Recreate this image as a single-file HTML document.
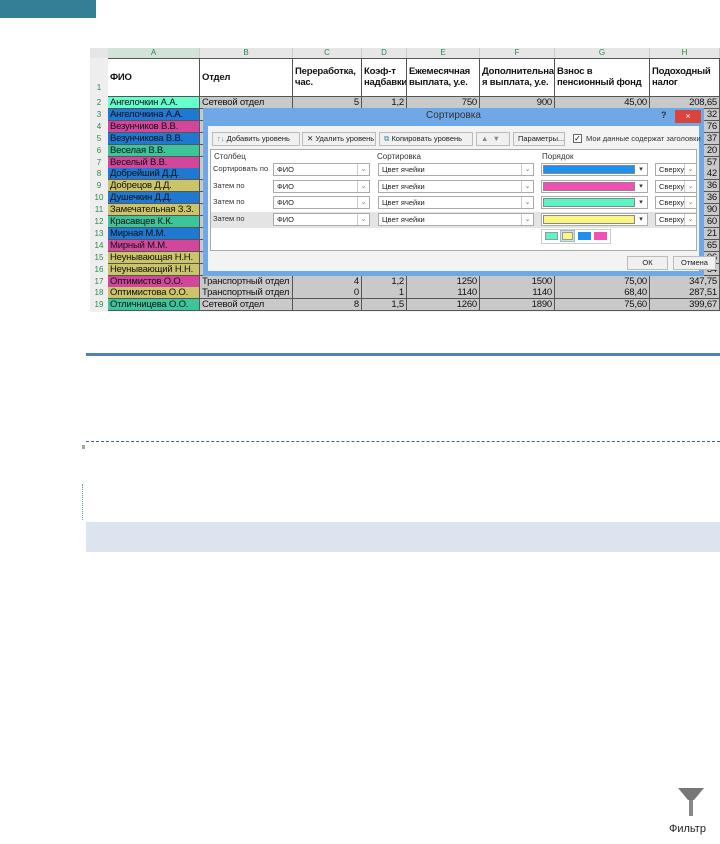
<!DOCTYPE html>
<html><head><meta charset="utf-8"><style>
*{margin:0;padding:0;box-sizing:border-box}
body{width:720px;height:844px;background:#fff;position:relative;overflow:hidden;font-family:"Liberation Sans",sans-serif}
.a{position:absolute}
.c{position:absolute;border-right:1px solid #555;border-bottom:1px solid #555;font-size:9.5px;letter-spacing:-0.2px;line-height:11px;white-space:nowrap;overflow:hidden;padding:0 2px;color:#111}
.r{text-align:right}
.h{position:absolute;background:#e6e6e6;color:#2a8a4a;font-size:8px;text-align:center;border-right:1px solid #ccc;line-height:10px}
.rn{position:absolute;left:90px;width:18px;font-size:8px;color:#2a8a4a;text-align:center;background:#eee}
.dl{font-size:8px;color:#333}
.cb{position:absolute;height:13px;background:#fff;border:1px solid #aaa;font-size:7.5px;line-height:11px;padding-left:3px;color:#222}
.cb .ar{position:absolute;right:0;top:0;width:12px;height:11px;border-left:1px solid #ccc;font-size:7px;text-align:center;color:#777}
.btn{position:absolute;top:132px;height:14px;background:#f0f0f0;border:1px solid #bbb;font-size:7.5px;line-height:12px;padding-left:4px;color:#222;white-space:nowrap;overflow:hidden}
</style></head><body>
<div class="a" style="left:0;top:0;width:96px;height:18px;background:#347f96"></div>

<div class="a" style="left:90px;top:48px;width:630px;height:264px;background:#f2f2f2"></div>
<div class="a" style="left:90px;top:48px;width:630px;height:10px;background:#e6e6e6"></div>
<div class="h" style="left:108px;top:48px;width:92px;background:#d3e3d8">A</div>
<div class="h" style="left:200px;top:48px;width:93px">B</div>
<div class="h" style="left:293px;top:48px;width:69px">C</div>
<div class="h" style="left:362px;top:48px;width:45px">D</div>
<div class="h" style="left:407px;top:48px;width:73px">E</div>
<div class="h" style="left:480px;top:48px;width:75px">F</div>
<div class="h" style="left:555px;top:48px;width:95px">G</div>
<div class="h" style="left:650px;top:48px;width:70px">H</div>
<div class="a" style="left:108px;top:58px;width:612px;height:39px;background:#fff;border-top:1px solid #555"></div>
<div class="rn" style="top:58px;height:39px;line-height:60px">1</div>
<div class="c" style="left:108px;top:58px;width:92px;height:39px;font-weight:bold;line-height:39px">ФИО</div>
<div class="c" style="left:200px;top:58px;width:93px;height:39px;font-weight:bold;line-height:39px">Отдел</div>
<div class="c" style="left:293px;top:58px;width:69px;height:39px;font-weight:bold;padding-top:8px">Переработка,<br>час.</div>
<div class="c" style="left:362px;top:58px;width:45px;height:39px;font-weight:bold;padding-top:8px">Коэф-т<br>надбавки</div>
<div class="c" style="left:407px;top:58px;width:73px;height:39px;font-weight:bold;padding-top:8px">Ежемесячная<br>выплата, у.е.</div>
<div class="c" style="left:480px;top:58px;width:75px;height:39px;font-weight:bold;padding-top:8px">Дополнительна<br>я выплата, у.е.</div>
<div class="c" style="left:555px;top:58px;width:95px;height:39px;font-weight:bold;padding-top:8px">Взнос в<br>пенсионный фонд</div>
<div class="c" style="left:650px;top:58px;width:70px;height:39px;font-weight:bold;padding-top:8px">Подоходный<br>налог</div>

<div id="rows"></div>
<script>
var names=["Ангелочкин А.А.","Ангелочкина А.А.","Везунчиков В.В.","Везунчикова В.В.","Веселая В.В.","Веселый В.В.","Добрейший Д.Д.","Добрецов Д.Д.","Душечкин Д.Д.","Замечательная З.З.","Красавцев К.К.","Мирная М.М.","Мирный М.М.","Неунывающая Н.Н.","Неунывающий Н.Н.","Оптимистов О.О.","Оптимистова О.О.","Отличницева О.О."];
var B="#1f78d2",M="#d2479c",G="#3cc49a",K="#cbc469",C="#66ffcc";
var cols=[C,B,M,B,G,M,B,K,B,K,G,B,M,K,K,M,K,G];
var hs=["208,65","32","76","37","20","57","42","36","36","90","60","21","65","06","34","347,75","287,51","399,67"];
var data={0:["Сетевой отдел","5","1,2","750","900","45,00"],15:["Транспортный отдел","4","1,2","1250","1500","75,00"],16:["Транспортный отдел","0","1","1140","1140","68,40"],17:["Сетевой отдел","8","1,5","1260","1890","75,60"]};
var xs=[[200,93],[293,69],[362,45],[407,73],[480,75],[555,95]];
var h="";
for(var i=0;i<18;i++){var t=97+i*11.9;
h+='<div class="rn" style="top:'+t+'px;height:12px;line-height:12px">'+(i+2)+'</div>';
h+='<div class="c" style="left:108px;top:'+t+'px;width:92px;height:12px;background:'+cols[i]+'">'+names[i]+'</div>';
for(var j=0;j<6;j++){var v=data[i]?data[i][j]:"";h+='<div class="c'+(j?' r':'')+'" style="left:'+xs[j][0]+'px;top:'+t+'px;width:'+xs[j][1]+'px;height:12px;background:#c9c9c9">'+v+'</div>';}
h+='<div class="c r" style="left:650px;top:'+t+'px;width:70px;height:12px;background:#c9c9c9">'+hs[i]+'</div>';}
document.getElementById("rows").innerHTML=h;
</script>

<div class="a" style="left:203px;top:108px;width:501px;height:168px;background:#6fa8e6;"></div>
<div class="a" style="left:203px;top:110px;width:501px;text-align:center;font-size:10px;color:#333">Сортировка</div>
<div class="a" style="left:661px;top:110px;font-size:9px;color:#333;font-weight:bold">?</div>
<div class="a" style="left:675px;top:110px;width:26px;height:13px;background:#d9453b;color:#fff;font-size:9px;text-align:center;line-height:13px">×</div>
<div class="a" style="left:208px;top:126px;width:491px;height:145px;background:#f3f3f3"></div>
<div class="btn" style="left:212px;width:88px"><span style="color:#48a">↑↓</span> Добавить уровень</div>
<div class="btn" style="left:302px;width:74px">✕ Удалить уровень</div>
<div class="btn" style="left:379px;width:94px"><span style="color:#48a">⧉</span> Копировать уровень</div>
<div class="btn" style="left:476px;width:34px;color:#888">▲ &nbsp;▼</div>
<div class="btn" style="left:513px;width:52px">Параметры...</div>
<div class="a" style="left:573px;top:134px;width:9px;height:9px;border:1px solid #666;background:#fff;font-size:8px;line-height:8px;text-align:center">✓</div>
<div class="a dl" style="left:586px;top:134px;font-size:7.5px;white-space:nowrap">Мои данные содержат заголовки</div>
<div class="a" style="left:210px;top:149px;width:487px;height:102px;background:#fff;border:1px solid #aaa"></div>
<div class="a dl" style="left:214px;top:152px">Столбец</div>
<div class="a dl" style="left:377px;top:152px">Сортировка</div>
<div class="a dl" style="left:542px;top:152px">Порядок</div>
<div class="a" style="left:211px;top:212px;width:485px;height:16px;background:#e4e4e4"></div>
<div id="dr"></div>
<script>
var labs=["Сортировать по","Затем по","Затем по","Затем по"],sw=["#1e90f0","#f050b4","#5cf5c8","#fbf582"],h2="";
for(var i=0;i<4;i++){var t=163+i*16.5;
h2+='<div class="a dl" style="left:213px;top:'+(t+1)+'px;font-size:7.5px">'+labs[i]+'</div>';
h2+='<div class="cb" style="left:273px;top:'+t+'px;width:97px">ФИО<div class="ar">⌄</div></div>';
h2+='<div class="cb" style="left:378px;top:'+t+'px;width:156px">Цвет ячейки<div class="ar">⌄</div></div>';
h2+='<div class="cb" style="left:541px;top:'+t+'px;width:107px;padding:1px"><div style="width:92px;height:9px;background:'+sw[i]+';border:1px solid #888"></div><div class="ar" style="border:0;color:#333">▾</div></div>';
h2+='<div class="cb" style="left:655px;top:'+t+'px;width:42px">Сверху<div class="ar">⌄</div></div>';}
document.getElementById("dr").innerHTML=h2;
</script>
<div class="a" style="left:541px;top:229px;width:70px;height:15px;background:#fff;border:1px solid #ccc"></div>
<div class="a" style="left:545px;top:232px;width:13px;height:8px;background:#5cf5c8;border:1px solid #999"></div>
<div class="a" style="left:560px;top:230px;width:15px;height:12px;background:#cfe6d8;border:1px solid #9bc"></div>
<div class="a" style="left:562px;top:232px;width:11px;height:8px;background:#fbf582;border:1px solid #999"></div>
<div class="a" style="left:578px;top:232px;width:13px;height:8px;background:#1e90f0"></div>
<div class="a" style="left:594px;top:232px;width:13px;height:8px;background:#f050b4"></div>
<div class="btn" style="left:627px;top:256px;width:41px;padding:0;text-align:center">ОК</div>
<div class="btn" style="left:673px;top:256px;width:43px;padding:0;text-align:center">Отмена</div>

<div class="a" style="left:86px;top:353px;width:634px;height:3px;background:#4f81bd"></div>
<div class="a" style="left:86px;top:441px;width:634px;border-top:1px dashed #2f6a8a"></div>
<div class="a" style="left:82px;top:445px;width:3px;height:4px;background:#9a9"></div>
<div class="a" style="left:82px;top:484px;width:1px;height:36px;border-left:1px dotted #4a9"></div>
<div class="a" style="left:86px;top:522px;width:634px;height:30px;background:#dbe4ef"></div>

<svg class="a" style="left:676px;top:786px" width="30" height="34" viewBox="0 0 30 34"><path d="M2 2H28L18 14H12Z" fill="#777"/><rect x="13" y="14" width="4" height="16" fill="#888"/></svg>
<div class="a" style="left:669px;top:823px;font-size:11px;color:#222">Фильтр</div>
</body></html>
